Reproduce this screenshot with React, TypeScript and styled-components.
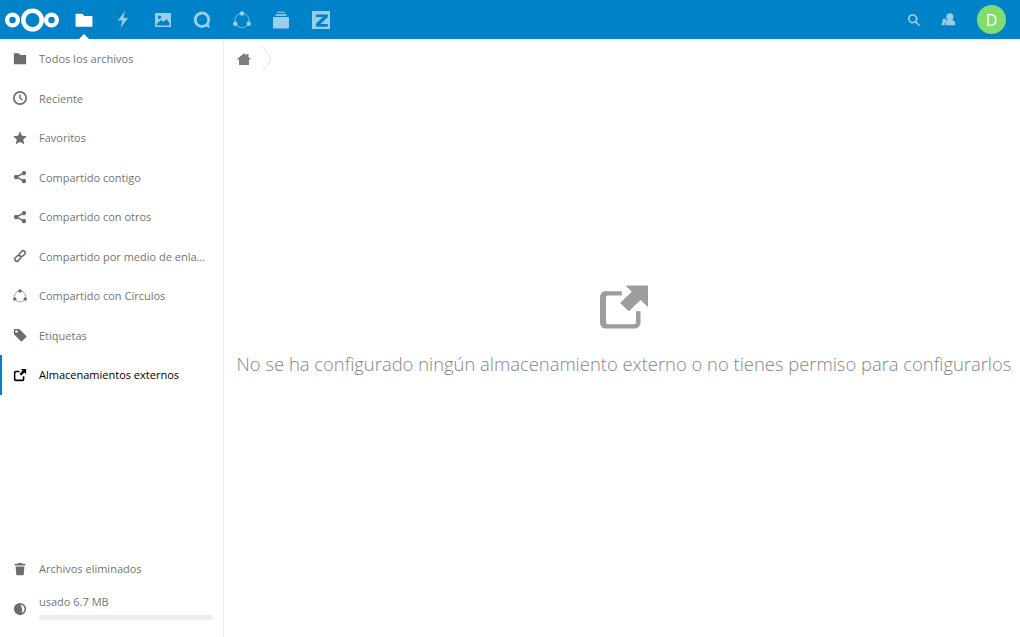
import React from 'react';
import styled, { createGlobalStyle } from 'styled-components';

const GlobalStyle = createGlobalStyle`
    html, body {
        margin: 0;
        padding: 0;
        background: #fff;
        font-family: "Open Sans", "Liberation Sans", sans-serif;
    }
`;

const Page = styled.div`
    display: flex;
    flex-direction: column;
    height: 637px;
    overflow: hidden;
`;

const Header = styled.header`
    display: flex;
    align-items: center;
    justify-content: space-between;
    height: 39px;
    background: #0082c9;
    flex: none;
`;

const HeaderGroup = styled.div`
    display: flex;
    align-items: center;
`;

const Logo = styled.svg`
    width: 56px;
    height: 26px;
    margin-left: 4px;
    margin-right: 4px;
    display: block;
`;

const AppButton = styled.div<{ $active?: boolean }>`
    position: relative;
    display: flex;
    align-items: center;
    justify-content: center;
    width: 39.5px;
    height: 39px;
    color: #fff;

    svg {
        display: block;
        opacity: ${props => (props.$active ? 1 : 0.6)};
    }

    ${props => props.$active && `
        &::after {
            content: '';
            position: absolute;
            left: 50%;
            bottom: 0;
            margin-left: -5px;
            border: 5px solid transparent;
            border-top: 0;
            border-bottom-color: #fff;
        }
    `}
`;

const HeaderAction = styled.div`
    display: flex;
    align-items: center;
    justify-content: center;
    width: 35px;
    height: 39px;
    color: #fff;

    svg {
        display: block;
        opacity: 0.6;
    }
`;

const Avatar = styled.div`
    display: flex;
    align-items: center;
    justify-content: center;
    width: 29px;
    height: 29px;
    margin-left: 11px;
    margin-right: 14px;
    border-radius: 50%;
    background: #82dd6f;
    color: #fff;
    font-size: 16px;
`;

const Body = styled.div`
    display: flex;
    flex: 1;
    min-height: 0;
`;

const Sidebar = styled.nav`
    display: flex;
    flex-direction: column;
    width: 223px;
    flex: none;
    border-right: 1px solid #ededed;
`;

const NavItem = styled.div<{ $active?: boolean }>`
    display: flex;
    align-items: center;
    height: 39.5px;
    padding-left: 11px;
    box-sizing: border-box;
    border-left: 2px solid ${props => (props.$active ? '#0082c9' : 'transparent')};
    color: #000;
    font-size: 11px;

    svg {
        flex: none;
        display: block;
        opacity: ${props => (props.$active ? 1 : 0.57)};
    }
`;

const NavLabel = styled.span<{ $active?: boolean }>`
    margin-left: 12px;
    width: 168px;
    white-space: nowrap;
    overflow: hidden;
    text-overflow: ellipsis;
    opacity: ${props => (props.$active ? 1 : 0.57)};
`;

const SidebarFooter = styled.div`
    margin-top: auto;
    padding-bottom: 17px;
`;

const QuotaRow = styled.div`
    display: flex;
    align-items: flex-start;
    padding-left: 13px;
    margin-top: 5.5px;
    font-size: 11px;
    color: #000;

    svg {
        flex: none;
        display: block;
        margin-top: 8px;
        opacity: 0.57;
    }
`;

const QuotaInfo = styled.div`
    margin-left: 12px;
    width: 174px;
`;

const QuotaText = styled.div`
    line-height: 16px;
    opacity: 0.57;
`;

const QuotaBar = styled.div`
    height: 5px;
    margin-top: 5px;
    border-radius: 3px;
    background: #ededed;
`;

const Main = styled.main`
    display: flex;
    flex-direction: column;
    flex: 1;
    min-width: 0;
`;

const Breadcrumb = styled.div`
    display: flex;
    align-items: center;
    height: 39px;
    padding-left: 12px;
    flex: none;
`;

const CrumbArrow = styled.svg`
    display: block;
    margin-left: 10px;
`;

const EmptyContent = styled.div`
    display: flex;
    flex-direction: column;
    align-items: center;
    padding-top: 206px;
    padding-left: 4px;
`;

const EmptyText = styled.h2`
    margin: 19px 0 0;
    font-size: 18.4px;
    font-weight: 300;
    line-height: 30px;
    color: #000;
    opacity: 0.5;
    white-space: nowrap;
`;

const Icon: React.FC<{ size?: number; view?: number; children: React.ReactNode }> = ({ size = 14, view = 16, children }) => (
    <svg width={size} height={size} viewBox={`0 0 ${view} ${view}`} fill="currentColor">
        {children}
    </svg>
);

const FolderIcon = () => (
    <Icon><path d="M1.500 1.500h5l2 2h6c.3 0 .5.200.5.500v9.500c0 .3-.2.500-.5.500h-13a.5.500 0 0 1-.5-.500V2c0-.3.200-.5.500-.5z" /></Icon>
);

const ClockIcon = () => (
    <Icon>
        <path d="M8 0a8 8 0 1 0 0 16A8 8 0 0 0 8 0zm0 2a6 6 0 1 1 0 12A6 6 0 0 1 8 2z" fillRule="evenodd" />
        <path d="M7.200 4h1.600v3.700l2.500 2.400-1.100 1.100-3-2.800z" />
    </Icon>
);

const StarIcon = () => (
    <Icon><path d="M8 .4l2.300 5 5.500.6-4.100 3.700 1.200 5.500L8 12.500 3.100 15.200l1.200-5.500L.2 6l5.500-.6z" /></Icon>
);

const ShareIcon = () => (
    <Icon>
        <circle cx="12.500" cy="3.500" r="2.500" />
        <circle cx="12.500" cy="12.500" r="2.500" />
        <circle cx="3.500" cy="8" r="2.500" />
        <path d="M3.500 8l9-4.500M3.500 8l9 4.500" stroke="currentColor" strokeWidth="1.600" />
    </Icon>
);

const LinkIcon = () => (
    <Icon>
        <g fill="none" stroke="currentColor" strokeWidth="1.800" transform="rotate(-45 8 8)">
            <rect x="0.500" y="5.700" width="8" height="4.600" rx="2.300" />
            <rect x="7.500" y="5.700" width="8" height="4.600" rx="2.300" />
        </g>
    </Icon>
);

const CirclesIcon: React.FC<{ size?: number }> = ({ size = 14 }) => (
    <Icon size={size}>
        <circle cx="8" cy="8.500" r="6.400" fill="none" stroke="currentColor" strokeWidth="0.700" />
        <circle cx="8" cy="2.200" r="2" />
        <circle cx="2" cy="11.300" r="2" />
        <circle cx="14" cy="11.300" r="2" />
    </Icon>
);

const TagIcon = () => (
    <Icon><path d="M1 1h6.200l8 8a1 1 0 0 1 0 1.400l-4.800 4.800a1 1 0 0 1-1.400 0l-8-8V1zm3 1.500a1.500 1.500 0 1 0 0 3 1.500 1.500 0 0 0 0-3z" fillRule="evenodd" /></Icon>
);

const ExternalIcon = () => (
    <Icon>
        <path d="M3 3h4.500v1.800H3.300a.5.500 0 0 0-.5.500v7.400c0 .3.200.5.500.5h7.400c.3 0 .5-.2.500-.5V9.500H13V13a2 2 0 0 1-2 2H3a2 2 0 0 1-2-2V5a2 2 0 0 1 2-2z" />
        <path d="M9 1h6v6l-2-2-3.600 3.600-2-2L11 3z" />
    </Icon>
);

const TrashIcon = () => (
    <Icon>
        <path d="M6 1h4l.5 1H14v2H2V2h3.500z" />
        <path d="M3 5h10l-.7 9.200c0 .5-.4.800-.8.800h-7c-.4 0-.8-.3-.8-.8z" />
    </Icon>
);

const QuotaIcon = () => (
    <Icon>
        <path d="M8 1a7 7 0 1 0 0 14A7 7 0 0 0 8 1zm.5 2.200a4.800 4.800 0 0 1 1.500 9.300C11 9.500 10.500 6 8.500 3.200z" fillRule="evenodd" />
    </Icon>
);

const AppFolderIcon = () => (
    <Icon size={18}><path d="M1 2.500h5.500l2 2H15c.3 0 .5.200.5.500v8.500c0 .3-.2.500-.5.500H1a.5.500 0 0 1-.5-.500V3c0-.3.200-.5.500-.5z" /></Icon>
);

const BoltIcon = () => (
    <Icon size={18} view={16}><path d="M9.800 0L3.500 8.500h4L5.800 15l6.700-8.800H8.300z" /></Icon>
);

const ImageIcon = () => (
    <Icon size={16} view={16}>
        <path
            fillRule="evenodd"
            d="M0 1h16v14H0zm1.500 1.500v11h13v-2.500l-3-4-3 3-2.500-2-4.500 4.200z M4.500 3.500a1.700 1.700 0 1 1 0 3.400 1.700 1.700 0 0 1 0-3.400z"
        />
    </Icon>
);

const TalkIcon = () => (
    <Icon size={18} view={16}>
        <path d="M8 .5a7.200 7.200 0 1 0 3.800 13.300l3.400 1.400-1.200-3.600A7.200 7.200 0 0 0 8 .5zm0 2.500a4.700 4.700 0 1 1 0 9.400A4.700 4.700 0 0 1 8 3z" fillRule="evenodd" />
    </Icon>
);

const DeckIcon = () => (
    <Icon size={18} view={18}>
        <path d="M5 .5h8v1.500H5z" opacity="0.7" />
        <path d="M3.500 3h11v2h-11z" opacity="0.85" />
        <path d="M2 6h14c.6 0 1 .4 1 1v9.500c0 .6-.4 1-1 1H2c-.6 0-1-.4-1-1V7c0-.6.400-1 1-1z" />
    </Icon>
);

const ZammadIcon = () => (
    <Icon size={18} view={16}>
        <path
            fillRule="evenodd"
            d="M0 0h16v16H0zm3.500 3v2.400h6.200L3.500 11.400V14h10.500v-2.500H7.500l6.500-6V3z"
        />
    </Icon>
);

const SearchIcon = () => (
    <Icon size={14} view={16}>
        <path d="M6.500 1a5.500 5.500 0 0 1 4.400 8.800l4.100 4.100-1.300 1.300-4.100-4.100A5.500 5.500 0 1 1 6.500 1zm0 2a3.500 3.500 0 1 0 0 7 3.500 3.500 0 0 0 0-7z" fillRule="evenodd" />
    </Icon>
);

const ContactsIcon = () => (
    <Icon size={15} view={16}>
        <circle cx="9.500" cy="5" r="3.800" />
        <path d="M9.500 8c3 0 5.500 1.500 5.500 4v2H5v-2c0-2.500 2-4 4.500-4z" />
        <circle cx="3.700" cy="9.200" r="2.300" />
        <path d="M3.700 10.500C2 10.500.6 11.500.6 13v1H4v-2c0-.5.200-1 .5-1.500z" />
    </Icon>
);

const HomeIcon = () => (
    <svg width="16" height="16" viewBox="0 0 16 16" fill="#000" opacity="0.5">
        <path d="M8 2.200L.5 8.500h2.500v5.500h10V8.500h2.500l-3-2.500V3h-2v1.300z" />
    </svg>
);

const ExternalLarge = () => (
    <svg width="48" height="46" viewBox="0 0 16 16" fill="#000" opacity="0.38" preserveAspectRatio="none">
        <path d="M2.300 2.500h5v1.500H2.600a.6.600 0 0 0-.6.600v8.800c0 .3.300.6.600.6h8.800c.3 0 .6-.3.600-.6V9.500h1.500V13.500a2 2 0 0 1-2 2H2a2 2 0 0 1-2-2v-9a2 2 0 0 1 2.300-2z" />
        <path d="M8.500.5H16v7.500l-2.500-2.400-3.900 3.900-2.900-2.900 3.900-3.900z" />
    </svg>
);

const navItems: { label: string; icon: React.ReactNode; active?: boolean }[] = [
    { label: 'Todos los archivos', icon: <FolderIcon /> },
    { label: 'Reciente', icon: <ClockIcon /> },
    { label: 'Favoritos', icon: <StarIcon /> },
    { label: 'Compartido contigo', icon: <ShareIcon /> },
    { label: 'Compartido con otros', icon: <ShareIcon /> },
    { label: 'Compartido por medio de enlace', icon: <LinkIcon /> },
    { label: 'Compartido con Círculos', icon: <CirclesIcon /> },
    { label: 'Etiquetas', icon: <TagIcon /> },
    { label: 'Almacenamientos externos', icon: <ExternalIcon />, active: true },
];

const App: React.FC = () => (
    <Page>
        <GlobalStyle />
        <Header>
            <HeaderGroup>
                <Logo viewBox="0 0 56 26">
                    <g fill="none" stroke="#fff">
                        <circle cx="28.500" cy="13" r="9.200" strokeWidth="4.600" />
                        <circle cx="8.500" cy="13" r="5.400" strokeWidth="4.300" />
                        <circle cx="47.500" cy="13" r="5.400" strokeWidth="4.300" />
                    </g>
                </Logo>
                <AppButton $active><AppFolderIcon /></AppButton>
                <AppButton><BoltIcon /></AppButton>
                <AppButton><ImageIcon /></AppButton>
                <AppButton><TalkIcon /></AppButton>
                <AppButton><CirclesIcon size={18} /></AppButton>
                <AppButton><DeckIcon /></AppButton>
                <AppButton><ZammadIcon /></AppButton>
            </HeaderGroup>
            <HeaderGroup>
                <HeaderAction><SearchIcon /></HeaderAction>
                <HeaderAction><ContactsIcon /></HeaderAction>
                <Avatar>D</Avatar>
            </HeaderGroup>
        </Header>
        <Body>
            <Sidebar>
                {navItems.map(item => (
                    <NavItem key={item.label} $active={item.active}>
                        {item.icon}
                        <NavLabel $active={item.active}>{item.label}</NavLabel>
                    </NavItem>
                ))}
                <SidebarFooter>
                    <NavItem>
                        <TrashIcon />
                        <NavLabel>Archivos eliminados</NavLabel>
                    </NavItem>
                    <QuotaRow>
                        <QuotaIcon />
                        <QuotaInfo>
                            <QuotaText>usado 6.7 MB</QuotaText>
                            <QuotaBar />
                        </QuotaInfo>
                    </QuotaRow>
                </SidebarFooter>
            </Sidebar>
            <Main>
                <Breadcrumb>
                    <HomeIcon />
                    <CrumbArrow width="10" height="26" viewBox="0 0 10 26" fill="none">
                        <path d="M1 1l8 12-8 12" stroke="#e4e4e4" strokeWidth="1" />
                    </CrumbArrow>
                </Breadcrumb>
                <EmptyContent>
                    <ExternalLarge />
                    <EmptyText>No se ha configurado ningún almacenamiento externo o no tienes permiso para configurarlos</EmptyText>
                </EmptyContent>
            </Main>
        </Body>
    </Page>
);

export default App;
